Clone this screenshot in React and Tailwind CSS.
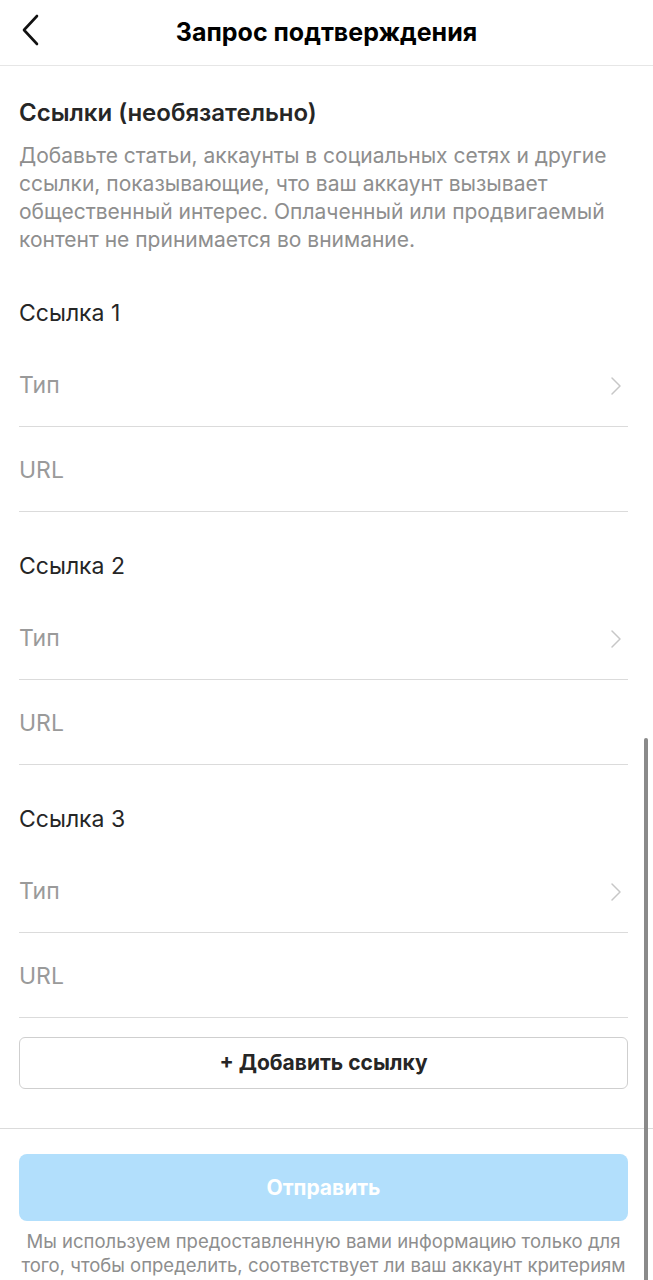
import React from "react";

const font = { fontFamily: "Inter, Roboto, 'Noto Sans', sans-serif" };

function ChevronRight() {
  return (
    <svg width="12" height="20" viewBox="0 0 12 20" fill="none">
      <path d="M2 2 L10 10 L2 18" stroke="#c7c7c7" strokeWidth="1.5" strokeLinecap="round" strokeLinejoin="round" />
    </svg>
  );
}

function LinkBlock({ n }) {
  return (
    <div>
      <div className="h-[83px] pt-[40px] px-[19px]">
        <div className="text-[23px] leading-[28px] text-[#262626]">Ссылка {n}</div>
      </div>
      <div className="ml-[19px] mr-[25px] h-[85px] flex items-center justify-between border-b border-[#dbdbdb]">
        <span className="text-[23px] text-[#9a9a9a] pt-[2px]">Тип</span>
        <span className="pr-[6px] pt-[4px]"><ChevronRight /></span>
      </div>
      <div className="ml-[19px] mr-[25px] h-[85px] flex items-center border-b border-[#dbdbdb]">
        <span className="text-[23px] text-[#9a9a9a] pt-[2px]">URL</span>
      </div>
    </div>
  );
}

export default function App() {
  return (
    <div className="relative w-[653px] h-[1280px] overflow-hidden bg-white" style={font}>
      <div className="h-[66px] border-b border-[#e6e6e6] relative flex items-center justify-center">
        <div className="absolute left-[19px] top-[14px]">
          <svg width="24" height="32" viewBox="0 0 24 32" fill="none">
            <path d="M18 2 L5 16 L18 30" stroke="#111" strokeWidth="2.6" strokeLinecap="round" strokeLinejoin="round" />
          </svg>
        </div>
        <div className="text-[25px] font-bold text-black">Запрос подтверждения</div>
      </div>

      <div className="pt-[32px] pl-[19px] pr-[25px]">
        <div className="text-[24px] leading-[30px] font-semibold text-[#262626]">Ссылки (необязательно)</div>
        <div className="mt-[14px] text-[21px] leading-[28px] text-[#8e8e8e]">
          Добавьте статьи, аккаунты в социальных сетях и другие ссылки, показывающие, что ваш аккаунт вызывает общественный интерес. Оплаченный или продвигаемый контент не принимается во внимание.
        </div>
      </div>

      <div className="mt-[5px]">
        <LinkBlock n={1} />
        <LinkBlock n={2} />
        <LinkBlock n={3} />
      </div>

      <div className="pl-[19px] pr-[25px] pt-[19px]">
        <div className="h-[52px] border border-[#cfcfcf] rounded-[6px] flex items-center justify-center">
          <span className="text-[21px] font-bold text-[#262626]">+ Добавить ссылку</span>
        </div>
      </div>

      <div className="mt-[39px] border-t border-[#dbdbdb]"></div>

      <div className="pl-[19px] pr-[25px] pt-[25px]">
        <div className="h-[67px] rounded-[8px] bg-[#b2dffc] flex items-center justify-center">
          <span className="text-[21px] font-bold text-white">Отправить</span>
        </div>
        <div className="mt-[8px] text-center text-[18.5px] leading-[24px] text-[#8e8e8e]">
          Мы используем предоставленную вами информацию только для того, чтобы определить, соответствует ли ваш аккаунт критериям подтверждения. Подробнее.
        </div>
      </div>

      <div className="absolute right-[5px] top-[738px] w-[4px] h-[560px] rounded-full bg-[#8a8a8a]"></div>
    </div>
  );
}
